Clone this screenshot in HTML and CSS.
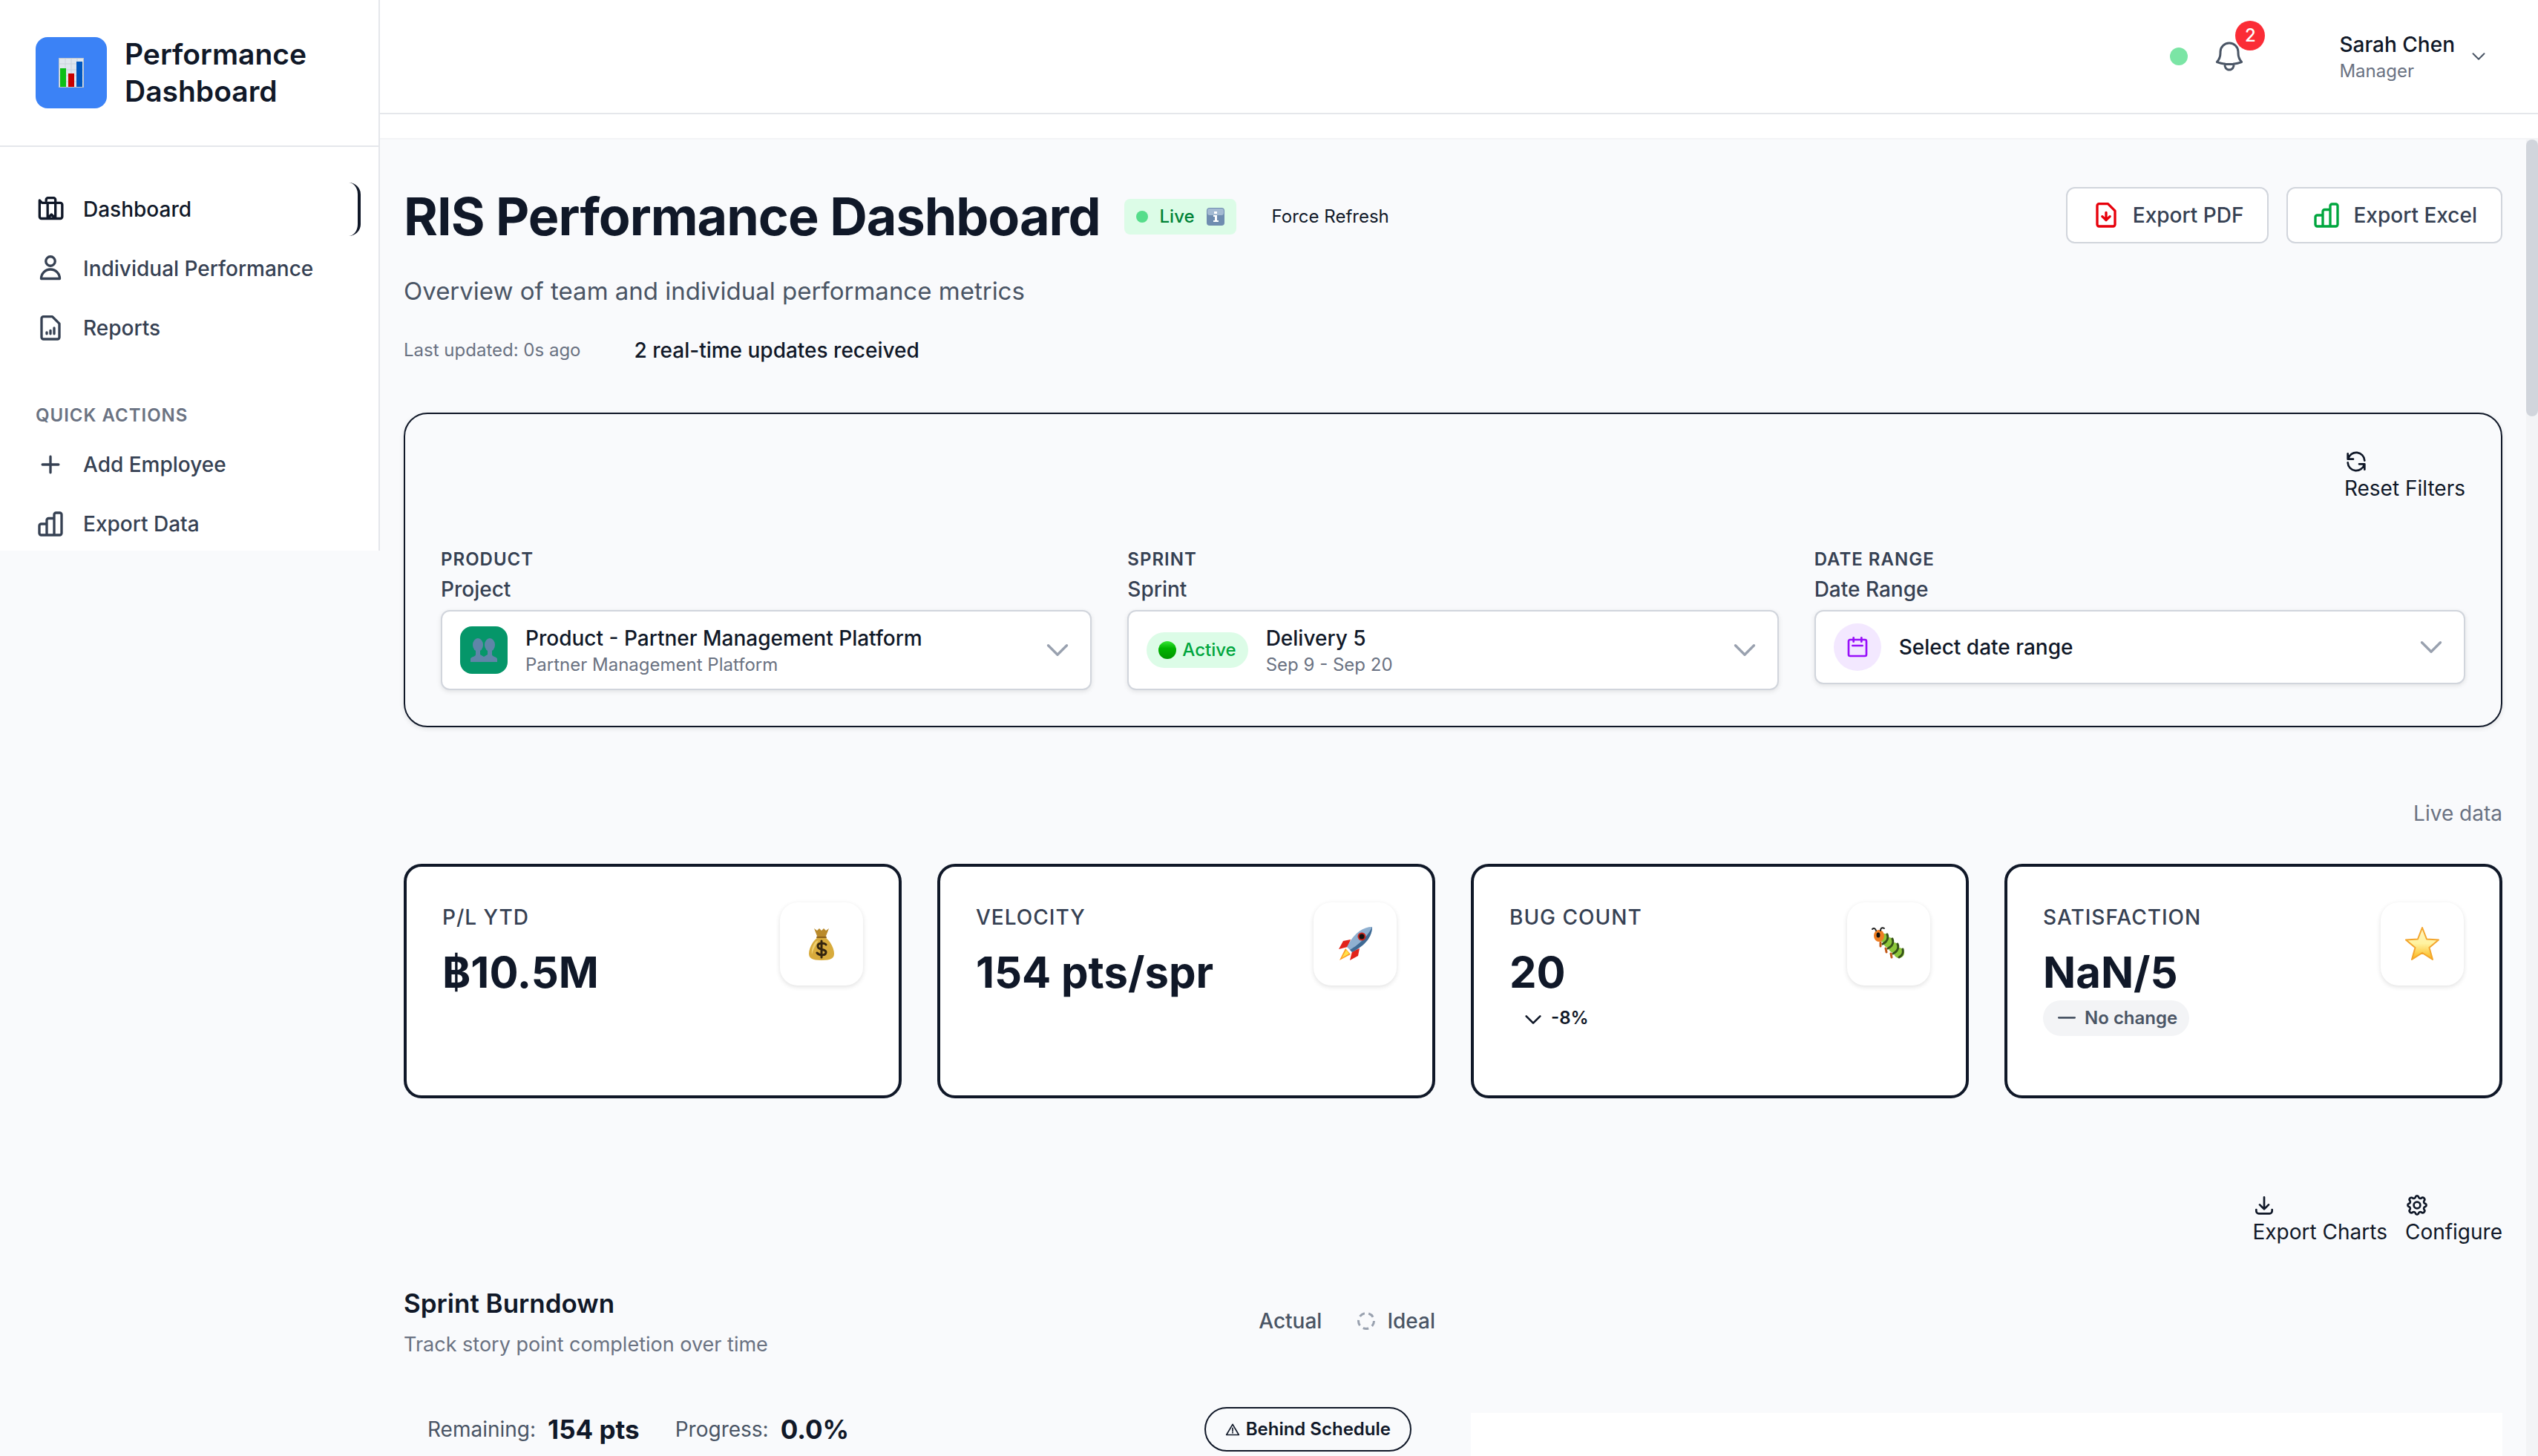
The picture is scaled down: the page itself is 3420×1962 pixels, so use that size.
FILE: index.html
```html
<!DOCTYPE html>
<html lang="en">
<head>
<meta charset="utf-8">
<title>Performance Dashboard</title>
<link rel="stylesheet" href="styles.css">
</head>
<body>
<svg class="sprite" aria-hidden="true">
  <symbol id="i-bars" viewBox="0 0 24 24"><path d="M3 13.500A1.500 1.500 0 0 1 4.500 12H9v9H4.500A1.500 1.500 0 0 1 3 19.500zM9 9a1.500 1.500 0 0 1 1.500-1.500H15V21H9zM15 4.500A1.500 1.500 0 0 1 16.500 3h3A1.500 1.500 0 0 1 21 4.500v15a1.500 1.500 0 0 1-1.500 1.500H15z"/></symbol>
  <symbol id="i-down" viewBox="0 0 24 24"><path d="m19.500 8.250-7.500 7.500-7.500-7.500"/></symbol>
</svg>
<div class="app">
  <aside class="sidebar">
    <div class="brand">
      <span class="brand-logo"><svg viewBox="0 0 34 40"><rect width="34" height="40" fill="#dfe6ee" stroke="#b9c2cc"/><path d="M1 8h32M1 16h32M1 24h32M1 32h32M9 1v38M17 1v38M25 1v38" stroke="#c9d2dc" stroke-width="1" fill="none"/><path fill="#0cbf16" d="M2 14h8v25H2z"/><path fill="#c80000" d="M13 21h8v18h-8z"/><path fill="#0057c0" d="M24 5h8v34h-8z"/></svg></span>
      <span class="brand-name">Performance Dashboard</span>
    </div>
    <nav class="nav">
      <a class="nav-item active" href="#"><svg class="icon" viewBox="0 0 24 24"><path d="M3.200 4.800 5.200 6.800H20a1.500 1.500 0 0 1 1.500 1.500v9.700a1.500 1.500 0 0 1-1.500 1.500H4.700a1.500 1.500 0 0 1-1.500-1.500zM8.500 5.200V4.300A1.500 1.500 0 0 1 10 2.800h4.500A1.500 1.500 0 0 1 16 4.300v15M9.700 19.300V6.800M11 18l1.800-1.800 1.800 1.800"/></svg>Dashboard</a>
      <a class="nav-item" href="#"><svg class="icon" viewBox="0 0 24 24"><path d="M15.750 6a3.750 3.750 0 1 1-7.500 0 3.750 3.750 0 0 1 7.500 0ZM4.500 20.118a7.500 7.500 0 0 1 15 0Z"/></svg>Individual Performance</a>
      <a class="nav-item" href="#"><svg class="icon" viewBox="0 0 24 24"><path d="M13.500 2.800H6.300a1.500 1.500 0 0 0-1.500 1.500v15.200a1.500 1.500 0 0 0 1.500 1.500h11.400a1.500 1.500 0 0 0 1.500-1.500V8.500zM9 15.500v1.200M12 14v2.700M15 12v4.700"/></svg>Reports</a>
      <h2 class="nav-title">Quick Actions</h2>
      <a class="nav-item" href="#"><svg class="icon" viewBox="0 0 24 24"><path d="M12 5.500v13M5.500 12h13"/></svg>Add Employee</a>
      <a class="nav-item" href="#"><svg class="icon"><use href="#i-bars"/></svg>Export Data</a>
    </nav>
  </aside>
  <div class="page">
    <header class="topbar">
      <span class="status-dot"></span>
      <button class="bell" aria-label="Notifications"><svg viewBox="0 0 24 24"><path d="M14.857 17.082a23.848 23.848 0 0 0 5.454-1.310A8.967 8.967 0 0 1 18 9.750V9A6 6 0 0 0 6 9v.750a8.967 8.967 0 0 1-2.312 6.022c1.733.640 3.560 1.085 5.455 1.310m5.714 0a24.255 24.255 0 0 1-5.714 0m5.714 0a3 3 0 1 1-5.714 0"/></svg><span class="bell-count">2</span></button>
      <button class="user"><span class="stack"><span class="user-name">Sarah Chen</span><span class="small muted">Manager</span></span><svg class="user-caret"><use href="#i-down"/></svg></button>
    </header>
    <div class="scroll">
      <main class="main">
        <section class="hero">
          <div class="hero-text">
            <div class="hero-row">
              <h1>RIS Performance Dashboard</h1>
              <span class="live"><span class="live-dot"></span>Live<svg viewBox="0 0 24 24"><rect width="24" height="24" rx="4" fill="#6f8db0"/><rect x="1" y="1" width="22" height="9" rx="3" fill="#a3bad2"/><path fill="#fff" d="M10 5h4v3h-4zM9 10h5v7h2v2H9v-2h2v-5H9z"/></svg></span>
              <button class="refresh">Force Refresh</button>
            </div>
            <p class="lead">Overview of team and individual performance metrics</p>
            <p class="updates"><span class="small muted">Last updated: 0s ago</span><span>2 real-time updates received</span></p>
          </div>
          <div class="exports">
            <button class="btn"><svg class="icon red" viewBox="0 0 24 24"><path d="M13.500 2.800H6.300a1.500 1.500 0 0 0-1.500 1.500v15.200a1.500 1.500 0 0 0 1.500 1.500h11.400a1.500 1.500 0 0 0 1.500-1.500V8.500zM12 9.800v6.200M8.900 13l3.100 3 3.100-3"/></svg>Export PDF</button>
            <button class="btn"><svg class="icon green"><use href="#i-bars"/></svg>Export Excel</button>
          </div>
        </section>
        <section class="filters">
          <button class="tool"><svg class="tool-icon" viewBox="0 0 24 24"><path d="M3.500 4v5.500H9M3.800 9.200A8.500 8.500 0 0 1 20.500 11M20.500 20v-5.500H15M20.200 14.800A8.500 8.500 0 0 1 3.500 13"/></svg>Reset Filters</button>
          <div class="filter-grid">
            <div class="filter">
              <h3>Product</h3><label for="f-project">Project</label>
              <button class="picker" id="f-project"><span class="team"><svg viewBox="0 0 36 32"><g fill="#5f85a8"><ellipse cx="10" cy="9" rx="7" ry="9"/><ellipse cx="26" cy="9" rx="7" ry="9"/><path d="M7 14h6v8l5 3v7H0v-4c0-3 7-3 7-6zM23 14h6v8c0 3 7 3 7 6v4H18v-7l5-3z"/></g></svg></span><span class="stack grow"><span>Product - Partner Management Platform</span><span class="small muted">Partner Management Platform</span></span><svg class="caret"><use href="#i-down"/></svg></button>
            </div>
            <div class="filter">
              <h3>Sprint</h3><label for="f-sprint">Sprint</label>
              <button class="picker" id="f-sprint"><span class="active-pill"><span class="orb"></span>Active</span><span class="stack grow"><span>Delivery 5</span><span class="small muted">Sep 9 - Sep 20</span></span><svg class="caret"><use href="#i-down"/></svg></button>
            </div>
            <div class="filter">
              <h3>Date Range</h3><label for="f-date">Date Range</label>
              <button class="picker" id="f-date"><span class="cal"><svg viewBox="0 0 24 24"><path d="M4.500 4.500h15A1.500 1.500 0 0 1 21 6v13.500a1.500 1.500 0 0 1-1.500 1.500h-15A1.500 1.500 0 0 1 3 19.500V6a1.500 1.500 0 0 1 1.500-1.500zM8 2.500v4M16 2.500v4M7 10.500h10"/></svg></span><span class="grow">Select date range</span><svg class="caret"><use href="#i-down"/></svg></button>
            </div>
          </div>
        </section>
        <p class="live-data">Live data</p>
        <section class="cards">
          <article class="card"><div class="grow"><h3>P/L YTD</h3><p class="value">฿10.5M</p></div><span class="card-icon"><svg viewBox="0 0 48 48"><path fill="#b98a2c" d="M14 3l4 3 3-3 3 3 3-3 3 3 4-3-5 13H19z"/><path fill="#d8ab3c" d="M19 15h10c8 6 12 16 12 22 0 6-4 9-17 9S7 43 7 37c0-6 4-16 12-22z"/><path fill="#efd070" d="M16 21c-4 5-6 11-5 17 2-7 5-12 9-19z"/><path stroke="#8a611c" stroke-width="2" d="M18 15h12"/><path fill="none" stroke="#33240f" stroke-width="3" d="M30 25c-2-3-11-3-11 2 0 6 11 3 11 8 0 5-9 5-12 1M24 20v22"/></svg></span></article>
          <article class="card"><div class="grow"><h3>Velocity</h3><p class="value">154 pts/spr</p></div><span class="card-icon"><svg viewBox="0 0 48 48"><path fill="#e2231a" d="M18 18 8 20 2 31l12-3zM30 30l-2 10-11 6 3-12z"/><path fill="#ff9a1f" d="M11 30 3 46l15-8z"/><path fill="#ffe14a" d="M12 32 6 43l10-6z"/><path fill="#8fb0d0" d="M47 1C34 1 22 10 13 28l7 7C38 26 47 14 47 1z"/><path fill="#3f6a94" d="M47 1c0 13-9 25-27 34l-3-3C32 23 42 12 47 1z"/><circle cx="33" cy="14" r="5.500" fill="#c9261f"/><circle cx="33" cy="14" r="3.500" fill="#111"/></svg></span></article>
          <article class="card"><div class="grow"><h3>Bug Count</h3><p class="value">20</p><p class="trend"><svg viewBox="0 0 24 24"><path d="m5 10 7 7 7-7"/></svg>-8%</p></div><span class="card-icon"><svg viewBox="0 0 48 48"><g fill="#8cc63a"><circle cx="18" cy="16" r="6"/><circle cx="24" cy="22" r="7"/><circle cx="31" cy="29" r="7"/><circle cx="38" cy="36" r="7"/></g><path fill="none" stroke="#35501a" stroke-width="3" d="M22 11c2 5 0 10-6 13M29 17c2 5 0 10-6 13M36 24c2 5 0 10-6 13M43 31c1 5 0 8-5 11"/><path fill="none" stroke="#c25a1a" stroke-width="3" d="M13 22v5M20 30l1 5M27 37l1 5"/><ellipse cx="11" cy="13" rx="7" ry="8" fill="#ee7d22"/><ellipse cx="10" cy="12" rx="2.500" ry="3.500" fill="#111"/><path fill="none" stroke="#222" stroke-width="2" d="M7 6C6 3 4 2 2 4M13 6c0-3 2-5 5-3"/></svg></span></article>
          <article class="card"><div class="grow"><h3>Satisfaction</h3><p class="value">NaN/5</p><p class="trend flat"><svg viewBox="0 0 24 24"><path d="M4 11.500h16"/></svg>No change</p></div><span class="card-icon"><svg viewBox="0 0 48 48"><defs><linearGradient id="star" x1="0" y1="0" x2="0" y2="1"><stop offset="0" stop-color="#fff3c0"/><stop offset=".5" stop-color="#fff3a0"/><stop offset="1" stop-color="#fbb414"/></linearGradient></defs><path fill="url(#star)" stroke="#f3a52c" stroke-width="2" stroke-linejoin="round" d="m24 2 6 15.500 16 1-12.500 10.500L38 45l-14-9-14 9 4.500-16L2 18.500l16-1z"/></svg></span></article>
        </section>
        <div class="chart-tools">
          <button class="tool"><svg class="tool-icon" viewBox="0 0 24 24"><path d="M4 16.500V18a2.500 2.500 0 0 0 2.500 2.500h11A2.500 2.500 0 0 0 20 18v-1.500M12 4v11.500M7.500 11.500l4.500 4.500 4.500-4.500"/></svg>Export Charts</button>
          <button class="tool"><svg class="tool-icon" viewBox="0 0 24 24"><path d="M10.400 3.800a1.650 1.650 0 0 1 3.200 0 1.800 1.800 0 0 0 2.700 1.100 1.650 1.650 0 0 1 2.800 2.800 1.800 1.800 0 0 0 1.100 2.700 1.650 1.650 0 0 1 0 3.200 1.800 1.800 0 0 0-1.100 2.700 1.650 1.650 0 0 1-2.800 2.800 1.800 1.800 0 0 0-2.700 1.100 1.650 1.650 0 0 1-3.200 0 1.800 1.800 0 0 0-2.700-1.100 1.650 1.650 0 0 1-2.800-2.800 1.800 1.800 0 0 0-1.100-2.700 1.650 1.650 0 0 1 0-3.200 1.800 1.800 0 0 0 1.100-2.700 1.650 1.650 0 0 1 2.800-2.800 1.800 1.800 0 0 0 2.700-1.100z"/><circle cx="12" cy="12" r="3.300"/></svg>Configure</button>
        </div>
        <section class="charts">
          <article class="burndown">
            <div class="chart-head">
              <div><h2>Sprint Burndown</h2><p class="muted note">Track story point completion over time</p></div>
              <p class="legend"><span>Actual</span><span class="ideal"><svg viewBox="0 0 24 24"><circle cx="12" cy="12" r="10.500" pathLength="60" stroke-dasharray="7 5"/></svg>Ideal</span></p>
            </div>
            <div class="stats">
              <p class="stat">Remaining: <strong>154 pts</strong></p>
              <p class="stat">Progress: <strong>0.0%</strong></p>
              <span class="behind"><svg viewBox="0 0 24 24"><path d="M12 4 22 21H2zM12 10v5M12 17v1"/></svg>Behind Schedule</span>
            </div>
          </article>
          <article class="blank"></article>
        </section>
      </main>
      <div class="track"><div class="thumb"></div></div>
    </div>
  </div>
</div>
</body>
</html>
```
FILE: styles.css
```css
* { box-sizing: border-box; }
html, body { height: 100%; }
body { margin: 0; background: #f9fafc; color: #101828; font: 400 28px/40px Inter, "Liberation Sans", sans-serif; overflow: hidden; }
h1, h2, h3, p { margin: 0; }
button { margin: 0; padding: 0; border: 0; background: none; color: inherit; font: inherit; text-align: left; cursor: pointer; }
svg { display: block; flex: none; fill: none; stroke: currentColor; stroke-width: 2; stroke-linecap: round; stroke-linejoin: round; }
.sprite { position: absolute; width: 0; height: 0; }
.brand-logo svg, .team svg, .card-icon svg, .live svg { stroke: none; }
.icon { width: 40px; height: 40px; }
.grow { flex: 1; min-width: 0; }
.stack { display: flex; flex-direction: column; }
.small { font-size: 24px; line-height: 32px; font-weight: 400; }
.muted { color: #6a7282; }

.app { display: flex; align-items: flex-start; height: 100%; }
.sidebar { width: 512px; flex: none; background: #fff; border-right: 2px solid #e5e7eb; }
.brand { display: flex; align-items: center; gap: 24px; padding: 48px; border-bottom: 2px solid #e5e7eb; }
.brand-logo { display: grid; place-items: center; flex: none; width: 96px; height: 96px; border-radius: 16px; background: #3b82f6; }
.brand-logo svg { width: 34px; height: 40px; }
.brand-name { font-size: 39px; line-height: 50px; font-weight: 600; }
.nav { display: flex; flex-direction: column; gap: 8px; padding: 48px 24px 0; }
.nav-item { display: flex; align-items: center; gap: 24px; height: 72px; padding: 0 24px; border-radius: 16px; color: #364153; font-weight: 500; text-decoration: none; white-space: nowrap; }
.nav-item.active { color: #101828; border-right: 4px solid #101828; }
.nav-title { margin: 58px 0 6px; padding: 0 24px; color: #6a7282; font-size: 24px; line-height: 32px; font-weight: 600; letter-spacing: 1px; text-transform: uppercase; }

.page { flex: 1; min-width: 0; height: 100%; display: flex; flex-direction: column; }
.topbar { display: flex; align-items: center; justify-content: flex-end; height: 154px; flex: none; padding-right: 68px; background: #fff; border-bottom: 2px solid #e5e7eb; }
.status-dot { width: 24px; height: 24px; border-radius: 50%; background: #7be5a5; }
.bell { position: relative; margin-left: 32px; color: #4a5565; }
.bell svg { width: 48px; height: 48px; stroke-width: 1.5; }
.bell-count { position: absolute; left: 32px; top: -24px; width: 40px; height: 40px; border-radius: 50%; background: #fb2c36; color: #fff; font-size: 24px; font-weight: 500; text-align: center; }
.user { display: flex; align-items: center; gap: 20px; margin-left: 124px; }
.user-name { font-weight: 500; }
.user-caret { width: 24px; height: 24px; color: #4a5565; }

.scroll { display: flex; flex: 1; min-height: 0; border-top: 32px solid #fff; }
.main { flex: 1; min-width: 0; padding: 64px 32px 0; border-top: 2px solid #f3f4f6; overflow: hidden; }
.track { width: 16px; background: #f3f4f6; padding-top: 2px; }
.thumb { height: 21%; border-radius: 8px; background: #d1d5dc; }

.hero { display: flex; justify-content: space-between; align-items: flex-start; }
.hero-row { display: flex; align-items: center; gap: 32px; height: 80px; }
h1 { font-size: 70px; line-height: 80px; font-weight: 700; letter-spacing: -1px; }
.live { display: flex; align-items: center; gap: 16px; height: 48px; padding: 0 16px; border-radius: 8px; background: #dcfce7; color: #008236; font-size: 24px; font-weight: 500; }
.live-dot { width: 16px; height: 16px; border-radius: 50%; background: #56dd8b; }
.live svg { width: 24px; height: 24px; }
.refresh { margin-left: 16px; font-size: 24px; }
.lead { margin-top: 32px; color: #4a5565; font-size: 33px; line-height: 56px; }
.updates { display: flex; align-items: center; gap: 72px; margin-top: 32px; font-weight: 500; }
.exports { display: flex; gap: 24px; }
.btn { display: flex; align-items: center; gap: 16px; height: 76px; padding: 0 32px; border: 2px solid #d1d5dc; border-radius: 12px; background: #fff; color: #364153; font-weight: 500; }
.red { color: #e7000b; }
.green { color: #00a63e; }

.filters { display: flex; flex-direction: column; margin-top: 64px; padding: 48px; border: 2px solid #101828; border-radius: 32px; box-shadow: 0 2px 6px rgb(0 0 0 / .1); }
.tool { font-size: 28px; line-height: 40px; }
.filters .tool { align-self: flex-end; }
.tool-icon { width: 32px; height: 32px; }
.filter-grid { display: grid; grid-template-columns: repeat(3, 1fr); gap: 48px; align-items: start; margin-top: 60px; }
.filter { display: flex; flex-direction: column; }
.filter h3 { font-size: 24px; line-height: 32px; font-weight: 600; letter-spacing: 1px; text-transform: uppercase; color: #364153; }
.filter label { margin: 4px 0 8px; font-weight: 500; color: #364153; }
.picker { display: flex; align-items: center; gap: 24px; padding: 16px 24px; border: 2px solid #d1d5dc; border-radius: 12px; background: #fff; font-weight: 500; box-shadow: 0 2px 6px rgb(0 0 0 / .1); }
.team, .cal { display: grid; place-items: center; width: 64px; height: 64px; border-radius: 16px; background: #059669; }
.team svg { width: 36px; height: 32px; }
.cal { border-radius: 50%; background: #f3e8ff; color: #9810fa; }
.cal svg { width: 32px; height: 32px; }
.caret { width: 40px; height: 40px; color: #99a1af; }
.active-pill { display: flex; align-items: center; gap: 8px; height: 48px; padding: 0 16px; border-radius: 24px; background: #dcfce7; color: #00a63e; font-size: 24px; }
.orb { width: 24px; height: 24px; border-radius: 50%; background: linear-gradient(#35e635, #00b400 40%, #009600); }

.live-data { margin: 96px 0 48px; color: #6a7282; text-align: right; }
.cards { display: grid; grid-template-columns: repeat(4, 1fr); gap: 48px; }
.card { display: flex; min-height: 316px; padding: 48px; border: 4px solid #101828; border-radius: 24px; background: #fff; }
.card h3 { font-size: 28px; line-height: 40px; font-weight: 500; letter-spacing: 1px; text-transform: uppercase; color: #364153; }
.value { margin-top: 16px; font-size: 58px; line-height: 76px; font-weight: 700; }
.trend { display: flex; align-items: center; gap: 8px; width: max-content; height: 48px; padding: 0 16px; border-radius: 24px; font-size: 24px; font-weight: 600; }
.trend svg { width: 32px; height: 32px; }
.trend.flat { background: #f3f4f6; color: #4a5565; }
.card-icon { display: grid; place-items: center; width: 112px; height: 112px; border-radius: 24px; background: #fff; box-shadow: 0 2px 6px rgb(0 0 0 / .12); }
.card-icon svg { width: 48px; height: 48px; }

.chart-tools { display: flex; justify-content: flex-end; gap: 24px; margin-top: 128px; }
.charts { display: grid; grid-template-columns: 1fr 1fr; gap: 48px; margin-top: 48px; }
.chart-head { display: flex; justify-content: space-between; align-items: center; }
.chart-head h2 { margin-bottom: 8px; font-size: 35px; line-height: 56px; font-weight: 600; }
.note { font-size: 27px; }
.legend { display: flex; gap: 48px; color: #4a5565; font-weight: 500; }
.ideal { display: flex; align-items: center; gap: 16px; }
.ideal svg { width: 24px; height: 24px; color: #99a1af; stroke-width: 3; stroke-linecap: butt; }
.stats { display: flex; align-items: center; gap: 48px; margin-top: 64px; padding: 0 32px; color: #4a5565; }
.stat { display: flex; align-items: center; gap: 16px; }
.stat strong { color: #101828; font-size: 35px; }
.behind { display: flex; align-items: center; gap: 8px; height: 60px; margin-left: auto; padding: 0 26px; border: 2px solid #101828; border-radius: 30px; color: #101828; font-size: 24px; font-weight: 600; }
.behind svg { width: 20px; height: 24px; }
.blank { min-height: 200px; margin-top: 176px; background: #fff; }
```
